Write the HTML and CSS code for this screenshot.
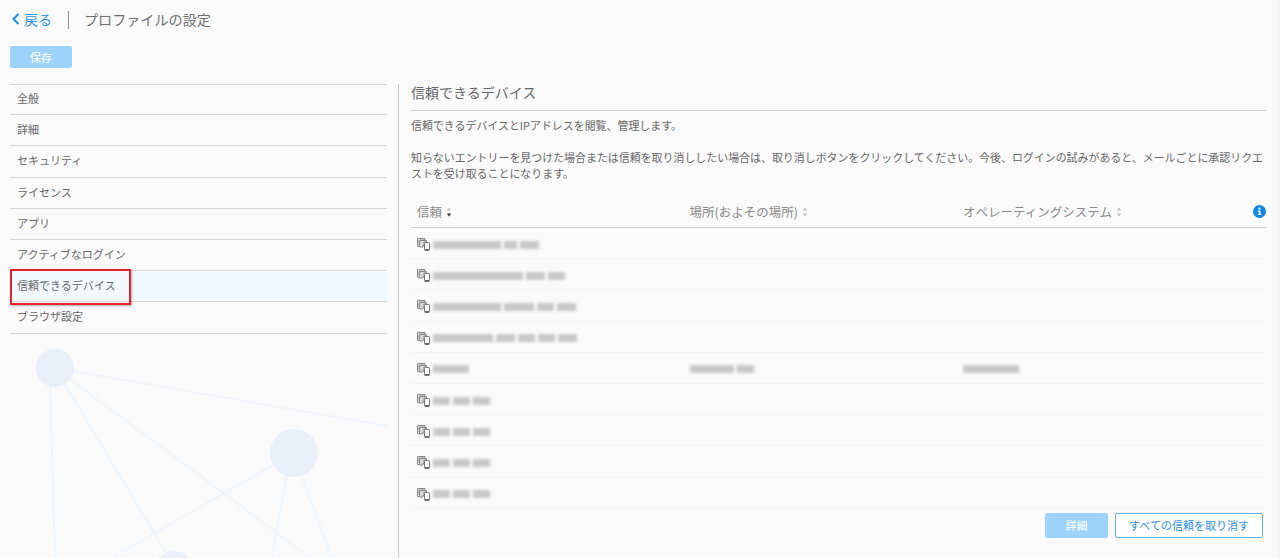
FILE: index.html
```html
<!DOCTYPE html>
<html lang="ja">
	<head>
		<meta charset="UTF-8">
		<title>プロファイルの設定</title>
		<link rel="stylesheet" href="styles.css">
	</head>
	<body>
		<svg class="defs" width="0" height="0">
			<symbol id="device" viewBox="0 0 13 13">
				<path d="M0.5 0.5h7.5v1.500h-6v5h1.500v1.500h-3z" fill="#fff" stroke="#8a8a8a"/>
				<path d="M2.500 2.500h7v1.500h-2.500v3.500h-1v1.500h-3.500z" fill="#d8d8d8" stroke="#8a8a8a"/>
				<rect x="7.500" y="4.500" width="5" height="8" rx="0.8" fill="#fff" stroke="#777"/>
				<path d="M8 11h4v1.500h-4z" fill="#666"/>
			</symbol>
			<symbol id="sort" viewBox="0 0 6 10">
				<path d="M3 0.500l2.200 3h-4.400z" fill="#bdbdbd"/>
				<path d="M3 9.500l-2.200-3h4.400z" fill="#bdbdbd"/>
			</symbol>
			<symbol id="sort-down" viewBox="0 0 6 10">
				<path d="M3 0.500l2.200 3h-4.400z" fill="#bdbdbd"/>
				<path d="M3 9.500l-2.200-3h4.400z" fill="#333"/>
			</symbol>
		</svg>
		<div class="page">
			<div class="top">
				<a class="back" href="#">
					<svg width="8" height="12" viewBox="0 0 8 12"><path d="M6.500 1l-5 5 5 5" fill="none" stroke="#1e8fe8" stroke-width="2"/></svg>
					戻る
				</a>
				<span class="top-sep"></span>
				<span class="top-title">プロファイルの設定</span>
			</div>
			<div class="save-row">
				<button class="btn btn-off btn-save">保存</button>
			</div>
			<div class="content">
				<div class="side">
					<ul class="nav">
						<li>全般</li>
						<li>詳細</li>
						<li>セキュリティ</li>
						<li>ライセンス</li>
						<li>アプリ</li>
						<li>アクティブなログイン</li>
						<li class="on">信頼できるデバイス<span class="mark"></span></li>
						<li>ブラウザ設定</li>
					</ul>
					<svg class="net" width="388" height="225" viewBox="0 333 388 225">
						<g stroke="#eff5fa" stroke-width="2" fill="none">
							<path d="M55 367L388 425"/>
							<path d="M50 380L55 558"/>
							<path d="M55 367L170 558"/>
							<path d="M55 367L312 558"/>
							<path d="M294 452L110 558"/>
							<path d="M287 470L272 558"/>
							<path d="M300 470L332 558"/>
						</g>
						<g fill="#e9f0f9">
							<circle cx="55" cy="367" r="19"/>
							<circle cx="294" cy="452" r="24"/>
							<circle cx="174" cy="570" r="20"/>
						</g>
					</svg>
				</div>
				<div class="main">
					<h2 class="main-title">信頼できるデバイス</h2>
					<p class="desc">信頼できるデバイスとIPアドレスを閲覧、管理します。</p>
					<p class="desc desc-long">知らないエントリーを見つけた場合または信頼を取り消ししたい場合は、取り消しボタンをクリックしてください。今後、ログインの試みがあると、メールごとに承認リクエストを受け取ることになります。</p>

					<div class="thead">
						<div class="th">信頼<svg width="6" height="10"><use href="#sort-down"/></svg></div>
						<div class="th">場所(およその場所)<svg width="6" height="10"><use href="#sort"/></svg></div>
						<div class="th">オペレーティングシステム<svg width="6" height="10"><use href="#sort"/></svg></div>
						<svg class="info" width="13" height="13" viewBox="0 0 13 13">
							<circle cx="6.500" cy="6.500" r="6.500" fill="#0d87e8"/>
							<rect x="5.500" y="2.500" width="2" height="2" fill="#fff"/>
							<path d="M4.800 5.500h2.700v3.500h1v1h-3.700v-1h1v-2.500h-1z" fill="#fff"/>
						</svg>
					</div>

					<div class="tr">
						<div class="td"><svg class="dev" width="13" height="13"><use href="#device"/></svg><i class="b w68"></i><i class="b w13"></i><i class="b w19"></i></div>
						<div class="td"></div><div class="td"></div>
					</div>
					<div class="tr">
						<div class="td"><svg class="dev" width="13" height="13"><use href="#device"/></svg><i class="b w90"></i><i class="b w19"></i><i class="b w17"></i></div>
						<div class="td"></div><div class="td"></div>
					</div>
					<div class="tr">
						<div class="td"><svg class="dev" width="13" height="13"><use href="#device"/></svg><i class="b w68"></i><i class="b w30"></i><i class="b w17"></i><i class="b w19"></i></div>
						<div class="td"></div><div class="td"></div>
					</div>
					<div class="tr">
						<div class="td"><svg class="dev" width="13" height="13"><use href="#device"/></svg><i class="b w60"></i><i class="b w19"></i><i class="b w17"></i><i class="b w17"></i><i class="b w19"></i></div>
						<div class="td"></div><div class="td"></div>
					</div>
					<div class="tr">
						<div class="td"><svg class="dev" width="13" height="13"><use href="#device"/></svg><i class="b w36"></i></div>
						<div class="td"><i class="b w44"></i><i class="b w17"></i></div>
						<div class="td"><i class="b w56"></i></div>
					</div>
					<div class="tr">
						<div class="td"><svg class="dev" width="13" height="13"><use href="#device"/></svg><i class="b w17"></i><i class="b w17"></i><i class="b w17"></i></div>
						<div class="td"></div><div class="td"></div>
					</div>
					<div class="tr">
						<div class="td"><svg class="dev" width="13" height="13"><use href="#device"/></svg><i class="b w17"></i><i class="b w17"></i><i class="b w17"></i></div>
						<div class="td"></div><div class="td"></div>
					</div>
					<div class="tr">
						<div class="td"><svg class="dev" width="13" height="13"><use href="#device"/></svg><i class="b w17"></i><i class="b w17"></i><i class="b w17"></i></div>
						<div class="td"></div><div class="td"></div>
					</div>
					<div class="tr">
						<div class="td"><svg class="dev" width="13" height="13"><use href="#device"/></svg><i class="b w17"></i><i class="b w17"></i><i class="b w17"></i></div>
						<div class="td"></div><div class="td"></div>
					</div>

					<div class="actions">
						<button class="btn btn-off btn-more">詳細</button>
						<button class="btn btn-line">すべての信頼を取り消す</button>
					</div>
				</div>
			</div>
		</div>
	</body>
</html>
```

FILE: styles.css
```css
*{
	margin:0px;
	padding:0px;
	outline:none;
	box-sizing:border-box;
}
html,body{
	height:100%;
	overflow:hidden;
}
body{
	background:#fafafa;
	color:#666;
	font-family:"Noto Sans CJK JP","Liberation Sans",sans-serif;
	font-size:11px;
}
.defs{
	display:block;
}
.page{
	height:558px;
	border-right:3px solid #f3f3f3;
	overflow:hidden;
}

/* top */
.top{
	height:46px;
	padding:9px 0 0 12px;
	display:flex;
	align-items:flex-start;
}
.back{
	height:20px;
	line-height:20px;
	font-size:14px;
	color:#2b97e8;
	text-decoration:none;
	display:flex;
	align-items:center;
	gap:4px;
}
.top-sep{
	width:1px;
	height:18px;
	margin:2px 15px 0 16px;
	background:#8c8c8c;
}
.top-title{
	line-height:20px;
	font-size:14.1px;
	color:#707070;
}
.save-row{
	height:38px;
	padding-left:10px;
}

/* buttons */
.btn{
	font-family:inherit;
	font-size:11px;
	border-radius:2px;
	display:block;
}
.btn-off{
	background:#9dd2fb;
	border:none;
	color:#f4fbff;
	font-weight:500;
}
.btn-save{
	width:62px;
	height:22px;
}
.btn-more{
	width:63px;
	height:25px;
}
.btn-line{
	width:148px;
	height:25px;
	background:#fff;
	border:1px solid #5eb0ee;
	color:#2d8fdc;
}

/* left */
.content{
	display:flex;
	height:474px;
}
.side{
	width:399px;
	flex:none;
	padding-left:10px;
	border-right:1px solid #c9c9c9;
	overflow:hidden;
}
.nav{
	width:377px;
	list-style:none;
	border-top:1px solid #d6d6d6;
}
.nav li{
	height:31.15px;
	line-height:29px;
	padding-left:7px;
	border-bottom:1px solid #d6d6d6;
	position:relative;
}
.nav li:first-child{
	height:30.3px;
	line-height:27px;
}
.nav li:last-child{
	height:31.85px;
}
.nav .on{
	background:#f2f9fe;
}
.mark{
	width:121px;
	height:36px;
	border:2px solid #e8202a;
	box-shadow:1px 1px 2px rgba(0,0,0,0.3);
	position:absolute;
	left:0px;
	top:-2px;
}
.net{
	display:block;
	margin-left:-10px;
}

/* right */
.main{
	width:855px;
	margin-left:12px;
}
.main-title{
	height:27px;
	line-height:16px;
	font-size:14px;
	font-weight:normal;
	border-bottom:1px solid #d0d0d0;
	color:#666;
}
.desc{
	margin-top:6px;
	font-size:10.95px;
	line-height:16px;
}
.desc-long{
	margin-top:16px;
}
.thead,.tr{
	display:grid;
	grid-template-columns:272.5px 273.5px 1fr;
}
.thead{
	grid-template-columns:272.5px 273.5px 1fr 13px;
	align-items:center;
	height:47px;
	padding-top:15px;
	border-bottom:1px solid #d0d0d0;
}
.th{
	padding-left:6px;
	font-size:12.5px;
	color:#8a8a8a;
	display:flex;
	align-items:center;
	gap:4px;
}
.info{
	display:block;
}
.tr{
	height:31.2px;
	border-bottom:1px solid #f3f3f3;
}
.td{
	padding:3px 0 0 6px;
	display:flex;
	align-items:center;
	gap:3px;
}
.dev{
	flex:none;
}
.b{
	display:block;
	height:8px;
	background:#c8c8c8;
	filter:blur(1.5px);
}
.w13{width:13px;}
.w17{width:17px;}
.w19{width:19px;}
.w30{width:30px;}
.w36{width:36px;}
.w44{width:44px;}
.w56{width:56px;}
.w60{width:60px;}
.w68{width:68px;}
.w90{width:90px;}
.actions{
	display:flex;
	justify-content:flex-end;
	gap:7px;
	margin-top:4px;
	padding-right:3px;
}
```
